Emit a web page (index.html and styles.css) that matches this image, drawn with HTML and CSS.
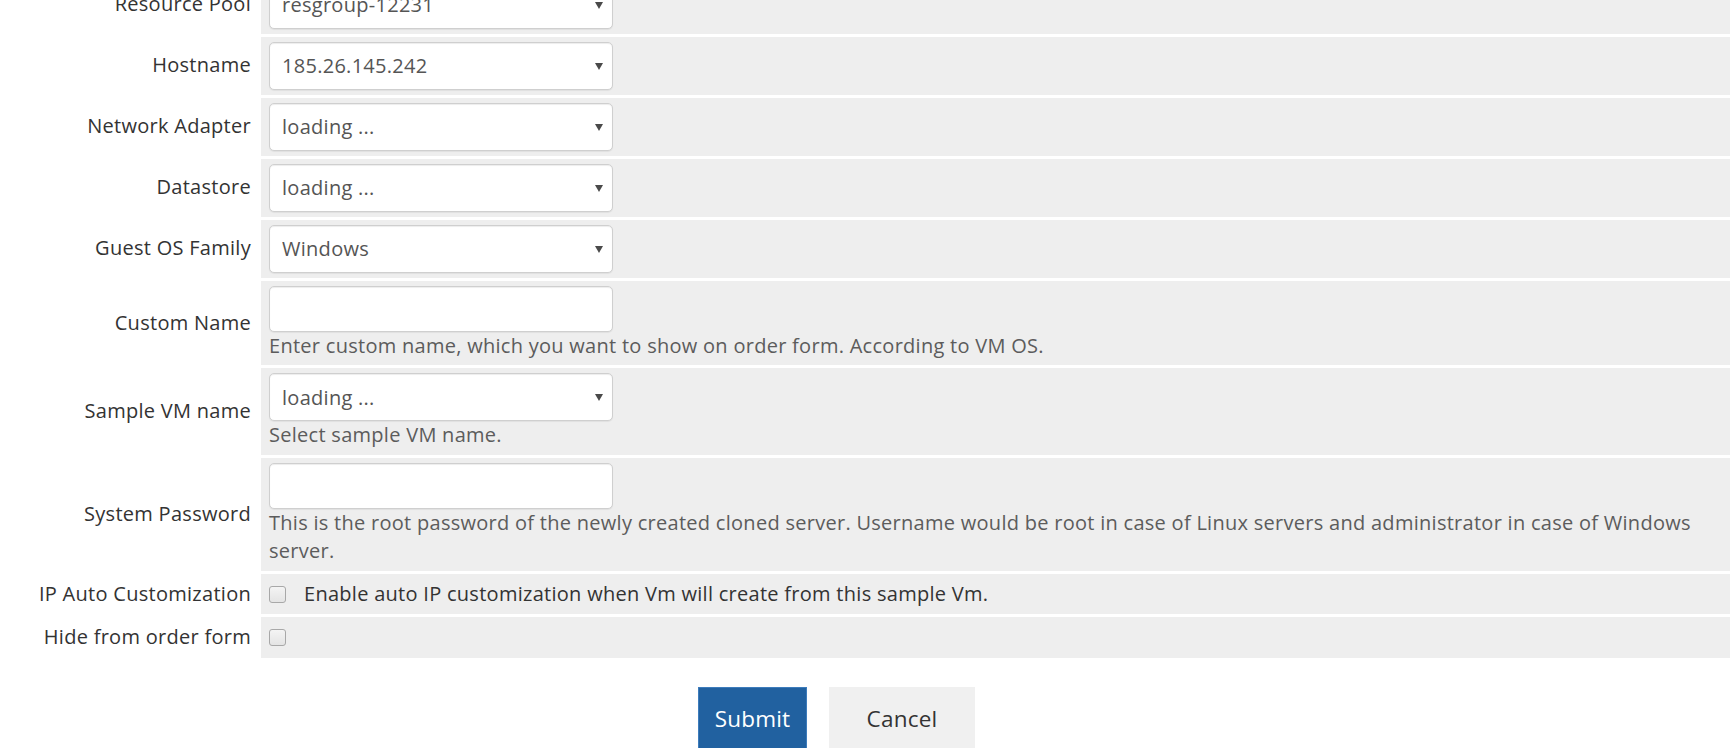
FILE: index.html
```html
<!DOCTYPE html>
<html lang="en">
<head>
<meta charset="utf-8">
<title>Clone VM settings</title>
<link rel="stylesheet" href="styles.css">
</head>
<body>
<div class="page">
  <form class="vm-form">
    <div class="row">
      <div class="label">Resource Pool</div>
      <div class="field"><span class="select-wrap"><select class="control"><option>resgroup-12231</option></select></span></div>
    </div>
    <div class="row">
      <div class="label">Hostname</div>
      <div class="field"><span class="select-wrap"><select class="control"><option>185.26.145.242</option></select></span></div>
    </div>
    <div class="row">
      <div class="label">Network Adapter</div>
      <div class="field"><span class="select-wrap"><select class="control"><option>loading ...</option></select></span></div>
    </div>
    <div class="row">
      <div class="label">Datastore</div>
      <div class="field"><span class="select-wrap"><select class="control"><option>loading ...</option></select></span></div>
    </div>
    <div class="row">
      <div class="label">Guest OS Family</div>
      <div class="field"><span class="select-wrap"><select class="control"><option>Windows</option></select></span></div>
    </div>
    <div class="row">
      <div class="label">Custom Name</div>
      <div class="field">
        <input class="control text-input" type="text">
        <span class="help">Enter custom name, which you want to show on order form. According to VM OS.</span>
      </div>
    </div>
    <div class="row">
      <div class="label">Sample VM name</div>
      <div class="field">
        <span class="select-wrap"><select class="control"><option>loading ...</option></select></span>
        <span class="help">Select sample VM name.</span>
      </div>
    </div>
    <div class="row">
      <div class="label">System Password</div>
      <div class="field">
        <input class="control text-input" type="password">
        <span class="help">This is the root password of the newly created cloned server. Username would be root in case of Linux servers and administrator in case of Windows server.</span>
      </div>
    </div>
    <div class="row">
      <div class="label">IP Auto Customization</div>
      <div class="field check-field">
        <input class="check" type="checkbox">
        <span class="check-text">Enable auto IP customization when Vm will create from this sample Vm.</span>
      </div>
    </div>
    <div class="row">
      <div class="label">Hide from order form</div>
      <div class="field check-field">
        <input class="check" type="checkbox">
      </div>
    </div>
  </form>
  <div class="actions">
    <button class="btn btn-primary" type="button">Submit</button>
    <button class="btn btn-default" type="button">Cancel</button>
  </div>
</div>
</body>
</html>
```

FILE: styles.css
```css
html, body {
  margin: 0;
  padding: 0;
  background: #ffffff;
}

body {
  font-family: "Open Sans", "Liberation Sans", sans-serif;
  font-size: 20px;
  line-height: 1.42857;
  letter-spacing: 0.28px;
  color: #333333;
  overflow: hidden;
}

.page {
  width: 1730px;
}

.vm-form {
  display: flex;
  flex-direction: column;
  gap: 3px;
  margin-top: -24.5px;
}

.row {
  display: grid;
  grid-template-columns: 261px 1fr;
}

.label {
  display: flex;
  align-items: center;
  justify-content: flex-end;
  padding-right: 10px;
  color: #333333;
  white-space: nowrap;
}

.field {
  background: #eeeeee;
  padding: 5px 8px;
  min-width: 0;
}

.select-wrap {
  position: relative;
  display: block;
  width: 344px;
}

.select-wrap::after {
  content: "";
  position: absolute;
  right: 10px;
  top: 50%;
  margin-top: -3px;
  border-left: 4px solid transparent;
  border-right: 4px solid transparent;
  border-top: 7px solid #4a4a4a;
  pointer-events: none;
}

.control {
  display: block;
  box-sizing: border-box;
  width: 344px;
  height: 48px;
  margin: 0;
  padding: 0 12px;
  font-family: inherit;
  font-size: 20px;
  letter-spacing: 0.28px;
  color: #555555;
  background: #ffffff;
  border: 1px solid #cfcfcf;
  border-radius: 5px;
  box-shadow: inset 0 1px 1px rgba(0, 0, 0, 0.075), 0 1px 1px rgba(0, 0, 0, 0.06);
  -webkit-appearance: none;
  appearance: none;
  outline: none;
}

.text-input {
  height: 46px;
}

.help {
  display: block;
  color: #5c5c5c;
  line-height: 1.42857;
}

.check-field {
  display: flex;
  align-items: center;
  padding-top: 6px;
  padding-bottom: 6px;
  min-height: 28.57px;
}

.check {
  -webkit-appearance: none;
  appearance: none;
  box-sizing: border-box;
  width: 17px;
  height: 17px;
  margin: 0;
  flex: none;
  border: 1px solid #a8a8a8;
  border-radius: 3px;
  background: linear-gradient(#f4f4f4, #e4e4e4);
}

.check-text {
  margin-left: 18px;
  color: #333333;
}

.actions {
  display: flex;
  justify-content: center;
  gap: 22px;
  margin-top: 29px;
  padding-right: 57px;
}

.btn {
  box-sizing: border-box;
  font-family: inherit;
  font-size: 22.5px;
  letter-spacing: 0.2px;
  line-height: 32px;
  padding: 15px 0;
  margin: 0;
  text-align: center;
  border-radius: 0;
  cursor: pointer;
}

.btn-primary {
  width: 109px;
  background: #2161a0;
  color: #ffffff;
  border: 1px solid #3d7cbc;
}

.btn-default {
  width: 146px;
  background: #f0f0f0;
  color: #333333;
  border: 1px solid #f0f0f0;
}
```
